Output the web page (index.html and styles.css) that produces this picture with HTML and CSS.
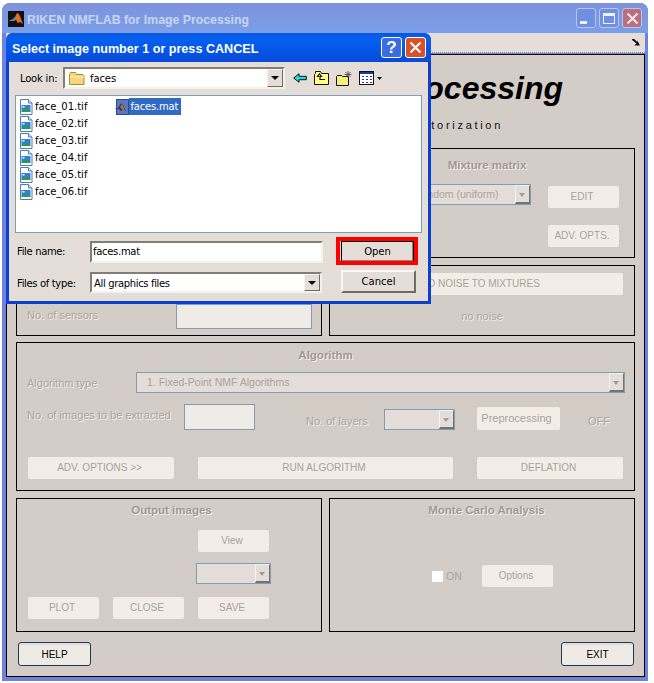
FILE: index.html
```html
<!DOCTYPE html>
<html lang="en">

<head>
    <meta charset="UTF-8">
    <title>RIKEN NMFLAB for Image Processing</title>
    <link rel="stylesheet" href="styles.css">
</head>

<body>
    <svg class="defs" width="0" height="0">
        <symbol id="ico-tif" viewBox="0 0 14 16">
            <path d="M1.5.5h8l3.5 3.5v11.500h-11.500z" fill="#fff" stroke="#4a7cc0"/>
            <path d="M9.500.5v3.500h3.500" fill="#d8e6f6" stroke="#4a7cc0"/>
            <rect x="2.500" y="6" width="9" height="7" fill="#2f7fd8"/>
            <path d="M2.500 13l3-4 2 2 2-1.500 2 3.500z" fill="#2c9a4a"/>
            <rect x="3.500" y="7" width="2" height="1.500" fill="#fff"/>
        </symbol>
    </svg>

    <div class="window">
        <div class="titlebar">
            <svg class="app-logo" width="16" height="16" viewBox="0 0 16 16">
                <rect width="16" height="16" fill="#111"/>
                <path d="M1 10l4-2 2-2 2-4 2 1 4 10-3-2-2 1-2-3-3 1z" fill="#e2701c"/>
                <path d="M1 10l4-2 2-2 1 3-3 1z" fill="#3f8fc0"/>
            </svg>
            <span class="titlebar-text">RIKEN NMFLAB for Image Processing</span>
            <div class="win-buttons">
                <div class="win-btn"><span class="glyph-min"></span></div>
                <div class="win-btn"><span class="glyph-max"></span></div>
                <div class="win-btn win-close">
                    <svg width="13" height="13" viewBox="0 0 13 13"><path d="M1.500 1.500l10 10M11.500 1.500l-10 10" stroke="#f0e4ea" stroke-width="2.200"/></svg>
                </div>
            </div>
        </div>

        <div class="menu-band">
            <svg width="8" height="7" viewBox="0 0 9 8"><path d="M0 0h2.500l3.500 3.500V1.500L9 7.500H2.500L5 5 0 1z" fill="#111"/></svg>
        </div>

        <main class="client">
            <header class="banner">
                <h1>Processing</h1>
                <p>Factorization</p>
            </header>

            <div class="two-col top-rows">
                <section class="panel panel-mix"></section>
                <section class="panel panel-mix">
                    <h2 class="panel-title">Mixture matrix</h2>
                    <div class="mix-body">
                        <div class="combo combo-mix"><span>random (uniform)</span><i class="combo-arrow"></i></div>
                        <div class="mix-buttons">
                            <button class="btn btn-sm" disabled>EDIT</button>
                            <button class="btn btn-sm" disabled>ADV. OPTS.</button>
                        </div>
                    </div>
                </section>
                <section class="panel panel-sensors">
                    <span class="lbl">No. of sensors</span>
                    <div class="field field-sensors"></div>
                </section>
                <section class="panel panel-noise">
                    <button class="btn btn-noise" disabled>ADD NOISE TO MIXTURES</button>
                    <span class="lbl">no noise</span>
                </section>
            </div>

            <section class="panel panel-algo">
                <h2 class="panel-title">Algorithm</h2>
                <div class="algo-type">
                    <span class="lbl">Algorithm type</span>
                    <div class="combo combo-algo"><span>1. Fixed-Point NMF Algorithms</span><i class="combo-arrow"></i></div>
                </div>
                <div class="algo-mid">
                    <span class="lbl lbl-images">No. of images to be extracted</span>
                    <div class="field field-images"></div>
                    <span class="lbl lbl-layers">No. of layers</span>
                    <div class="combo combo-layers"><i class="combo-arrow"></i></div>
                    <button class="btn btn-pre" disabled>Preprocessing</button>
                    <span class="lbl lbl-off">OFF</span>
                </div>
                <div class="algo-actions">
                    <button class="btn btn-adv" disabled>ADV. OPTIONS &gt;&gt;</button>
                    <button class="btn btn-run" disabled>RUN ALGORITHM</button>
                    <button class="btn btn-adv" disabled>DEFLATION</button>
                </div>
            </section>

            <div class="two-col bottom-row">
                <section class="panel panel-output">
                    <h2 class="panel-title">Output images</h2>
                    <div class="output-stack">
                        <button class="btn btn-sm" disabled>View</button>
                        <div class="combo combo-output"><i class="combo-arrow"></i></div>
                    </div>
                    <div class="output-actions">
                        <button class="btn btn-sm" disabled>PLOT</button>
                        <button class="btn btn-sm" disabled>CLOSE</button>
                        <button class="btn btn-sm" disabled>SAVE</button>
                    </div>
                </section>
                <section class="panel panel-monte">
                    <h2 class="panel-title">Monte Carlo Analysis</h2>
                    <div class="monte-body">
                        <i class="checkbox"></i>
                        <span class="on-text">ON</span>
                        <button class="btn btn-sm" disabled>Options</button>
                    </div>
                </section>
            </div>

            <footer class="footer">
                <button class="btn-main">HELP</button>
                <button class="btn-main">EXIT</button>
            </footer>
        </main>
    </div>

    <!-- file dialog on top of the main window -->
    <div class="dialog">
        <div class="dlg-title">
            <span class="dlg-title-text">Select image number 1 or press CANCEL</span>
            <div class="dlg-btns">
                <div class="dlg-btn dlg-help">?</div>
                <div class="dlg-btn dlg-close">
                    <svg width="13" height="13" viewBox="0 0 13 13"><path d="M1.500 1.500l10 10M11.500 1.500l-10 10" stroke="#fff" stroke-width="2.200"/></svg>
                </div>
            </div>
        </div>
        <div class="dlg-body">
            <div class="look-row">
                <span class="look-label">Look in:</span>
                <div class="xp-combo look-combo">
                    <svg width="16" height="13" viewBox="0 0 16 13">
                        <path d="M.5 2.500l1-2h5l1 2h6.500l1 1v9h-14.500z" fill="#f6d77c" stroke="#b08a2e"/>
                        <path d="M1 5h14" stroke="#fdf2c4"/>
                    </svg>
                    <span class="look-text">faces</span>
                    <i class="xp-arrow"></i>
                </div>
                <div class="toolbar">
                    <svg width="14" height="10" viewBox="0 0 14 10"><path d="M.7 5L6 .7v2.600h7.300v3.400H6v2.600z" fill="#19e0e0" stroke="#111"/></svg>
                    <svg width="15" height="14" viewBox="0 0 15 14">
                        <path d="M.5 13.500v-10l1-1v-2h5l1 2h7v11z" fill="#ffff80" stroke="#111"/>
                        <path d="M5 5.500h-1.500l2-2.500 2 2.500H6v3h5" fill="none" stroke="#111" stroke-width="1.200"/>
                    </svg>
                    <svg width="17" height="15" viewBox="0 0 17 15">
                        <path d="M.5 14.500v-9l1-1h4l1 1h6v9z" fill="#f6f07a" stroke="#111"/>
                        <path d="M12 0v7M8.500 3.500h7M9.500 1l5 5M14.500 1l-5 5" stroke="#444" stroke-width=".8"/>
                    </svg>
                    <svg class="views" width="24" height="14" viewBox="0 0 24 14">
                        <rect x=".5" y=".5" width="14" height="13" fill="#fff" stroke="#111"/>
                        <rect x="1" y="1" width="13" height="2" fill="#1a3a9a"/>
                        <path d="M3 5h2v1H3zM7 5h2v1H7zM11 5h2v1h-2zM3 8h2v1H3zM7 8h2v1H7zM11 8h2v1h-2zM3 11h2v1H3zM7 11h2v1H7zM11 11h2v1h-2z" fill="#1a3a9a"/>
                        <path d="M18 6h5l-2.500 3z" fill="#111"/>
                    </svg>
                </div>
            </div>

            <div class="file-list">
                <ul class="file-col">
                    <li><svg width="14" height="16"><use href="#ico-tif"/></svg>face_01.tif</li>
                    <li><svg width="14" height="16"><use href="#ico-tif"/></svg>face_02.tif</li>
                    <li><svg width="14" height="16"><use href="#ico-tif"/></svg>face_03.tif</li>
                    <li><svg width="14" height="16"><use href="#ico-tif"/></svg>face_04.tif</li>
                    <li><svg width="14" height="16"><use href="#ico-tif"/></svg>face_05.tif</li>
                    <li><svg width="14" height="16"><use href="#ico-tif"/></svg>face_06.tif</li>
                </ul>
                <ul class="file-col file-col-mat">
                    <li>
                        <svg width="15" height="16" viewBox="0 0 15 16">
                            <rect x="2.500" y=".5" width="12" height="15" fill="#5a78c0" stroke="#2c4a90"/>
                            <path d="M0 10l4-1 3-5 2 2 3 6-3-1-2 1-2-2z" fill="#2a3a70"/>
                            <path d="M6 8l2-3 2 4 1 3-2-1z" fill="#c86a30"/>
                        </svg>
                        <span class="selected">faces.mat</span>
                    </li>
                </ul>
            </div>

            <div class="dlg-form">
                <span class="form-label">File name:</span>
                <input class="name-input" type="text" value="faces.mat">
                <div class="open-wrap"><button class="xp-btn xp-open">Open</button></div>

                <span class="form-label form-label-type">Files of type:</span>
                <div class="xp-combo type-combo">
                    <span class="type-text">All graphics files</span>
                    <i class="xp-arrow"></i>
                </div>
                <button class="xp-btn xp-cancel">Cancel</button>
            </div>
        </div>
    </div>
</body>

</html>
```

FILE: styles.css
```css
* {
    box-sizing: border-box;
}

html,
body {
    margin: 0;
    padding: 0;
    height: 683px;
    overflow: hidden;
    background: #fff;
}

body {
    position: relative;
    font-family: "Liberation Sans", Arial, sans-serif;
    font-size: 11px;
}

.defs {
    position: absolute;
}

ul {
    list-style: none;
    margin: 0;
    padding: 0;
}

/* main window */
.window {
    width: 646px;
    height: 678px;
    margin: 3px 0 0 2px;
    padding: 0 3px 4px 4px;
    background: #6f83dc;
    border-radius: 8px 8px 0 0;
    display: flex;
    flex-direction: column;
}

.titlebar {
    height: 30px;
    margin: 0 -3px 0 -4px;
    padding: 0 6px;
    display: flex;
    align-items: center;
    border-radius: 8px 8px 0 0;
    background: linear-gradient(#7d93dc, #7c9be4 70%, #7a9fe8);
}

.app-logo {
    margin-right: 3px;
    margin-top: 1px;
}

.titlebar-text {
    font-family: "Liberation Sans", sans-serif;
    font-weight: bold;
    font-size: 12.300px;
    color: #c8d5f4;
    padding-top: 3px;
}

.win-buttons {
    margin-left: auto;
    display: flex;
    gap: 3px;
}

.win-btn {
    width: 20px;
    height: 20px;
    border: 1px solid #b7c7f0;
    border-radius: 3px;
    background: #6f90e0;
    display: flex;
    align-items: center;
    justify-content: center;
    position: relative;
}

.win-close {
    background: #b8707f;
}

.glyph-min {
    width: 7px;
    height: 3px;
    background: #eef2fb;
    position: relative;
    top: 4px;
    left: -3px;
}

.glyph-max {
    width: 12px;
    height: 11px;
    border: 1px solid #eef2fb;
    border-top-width: 3px;
}

.menu-band {
    height: 20px;
    background: #e5ded8;
    border-bottom: 1px dotted #8a8580;
    display: flex;
    justify-content: flex-end;
    align-items: center;
    padding-right: 5px;
}

.client {
    flex: 1;
    margin-top: 1px;
    border: 1px solid #000;
    background: #d4ccc6;
    padding: 0 9px;
    display: flex;
    flex-direction: column;
}

.banner {
    height: 93px;
    flex: none;
}

.banner h1 {
    margin: 18px 0 0;
    font-size: 32px;
    line-height: 30px;
    font-weight: bold;
    font-style: italic;
    color: #000;
    text-align: right;
    white-space: nowrap;
    padding-right: 72px;
}

.banner p {
    margin: 15px 0 0;
    font-size: 11px;
    line-height: 14px;
    letter-spacing: 2.700px;
    text-align: right;
    white-space: nowrap;
    padding-right: 132px;
    color: #111;
}

.two-col {
    display: grid;
    grid-template-columns: 306px 306px;
    column-gap: 7px;
    flex: none;
}

.top-rows {
    grid-template-rows: 110px 71px;
    row-gap: 7px;
}

.panel {
    border: 1px solid #000;
    min-width: 0;
}

.panel-title {
    margin: 0;
    text-align: center;
    font-size: 11.500px;
    line-height: 14px;
    font-weight: bold;
    color: #a09a95;
    text-shadow: 1px 1px 0 #f4f0ec;
}

.lbl {
    font-size: 11px;
    line-height: 14px;
    color: #aaa4a0;
    text-shadow: 1px 1px 0 #f4f0ec;
    white-space: nowrap;
}

.btn {
    display: block;
    padding: 0 3px 1px 0;
    border: 0;
    border-radius: 2px;
    background: #f3ede7;
    color: #a8a39c;
    font-family: "Liberation Sans", Arial, sans-serif;
    font-size: 10px;
    height: 22px;
    white-space: nowrap;
}

.btn-sm {
    width: 71px;
}

.field {
    background: #eeece4;
    border: 1px solid #7f9db9;
}

.combo {
    position: relative;
    display: flex;
    align-items: center;
    background: #e5ded8;
    border: 1px solid #7f9db9;
    color: #a8a39c;
    font-size: 10.5px;
}

.combo-arrow {
    position: absolute;
    right: 0;
    top: 0;
    bottom: 0;
    width: 15px;
    background: #e5ded8;
    border: 1px solid;
    border-color: #f6f2ee #77736e #77736e #f6f2ee;
    border-bottom-width: 2px;
}

.combo-arrow::after {
    content: "";
    position: absolute;
    left: 3px;
    top: 7px;
    border: 3.500px solid transparent;
    border-top: 4px solid #a09b96;
    border-bottom: 0;
}

/* mixture + noise */
.panel-mix .panel-title {
    margin-top: 9px;
    padding-left: 10px;
}

.mix-body {
    display: flex;
    justify-content: flex-end;
    gap: 17px;
    padding-right: 15px;
    margin-top: 12px;
}

.combo-mix {
    width: 124px;
    height: 21px;
    padding: 0 0 1px 10px;
}

.mix-buttons {
    display: flex;
    flex-direction: column;
    gap: 17px;
    margin-top: 2px;
}

.panel-sensors {
    display: flex;
    align-items: flex-start;
    justify-content: space-between;
    padding: 38px 9px 0 10px;
}

.panel-sensors .lbl {
    margin-top: 4px;
}

.field-sensors {
    width: 136px;
    height: 25px;
}

.panel-noise {
    display: flex;
    flex-direction: column;
    align-items: center;
    padding: 7px 11px 0 0;
}

.btn-noise {
    width: 293px;
    align-self: flex-end;
    padding-left: 4px;
}

.panel-noise .lbl {
    margin: 14px -11px 0 0;
}

/* algorithm */
.panel-algo {
    margin-top: 6px;
    height: 149px;
    flex: none;
    padding: 5px 10px 0 10px;
}

.algo-type {
    display: flex;
    align-items: center;
    margin-top: 10px;
}

.algo-type .lbl {
    width: 109px;
    margin-top: 1px;
}

.combo-algo {
    flex: 1;
    height: 21px;
    margin-right: -1px;
    padding: 0 0 1px 10px;
}

.algo-mid {
    display: flex;
    height: 26px;
    margin-top: 11px;
    align-items: flex-start;
}

.lbl-images {
    width: 157px;
    margin-top: 4px;
}

.field-images {
    width: 71px;
    height: 26px;
}

.lbl-layers {
    margin: 10px 0 0 51px;
    width: 78px;
}

.combo-layers {
    width: 71px;
    height: 21px;
    margin-top: 5px;
}

.btn-pre {
    width: 83px;
    height: 23px;
    margin: 3px 0 0 22px;
    padding: 0 4px 2px 0;
    font-size: 11px;
}

.lbl-off {
    margin: 10px 0 0 28px;
}

.algo-actions {
    display: flex;
    gap: 24px;
    margin: 27px 0 0 1px;
}

.btn-adv {
    width: 146px;
}

.btn-run {
    width: 255px;
}

/* output + monte carlo */
.bottom-row {
    margin-top: 7px;
    height: 134px;
}

.panel-output {
    padding: 4px 0 0 11px;
}

.panel-output .panel-title {
    margin-left: -6px;
}

.output-stack {
    display: flex;
    flex-direction: column;
    align-items: flex-end;
    padding-right: 52px;
    margin-top: 13px;
}

.combo-output {
    width: 75px;
    height: 21px;
    margin: 11px -2px 0 0;
}

.output-actions {
    display: flex;
    gap: 14px;
    margin-top: 13px;
}

.panel-monte {
    padding-top: 4px;
}

.panel-monte .panel-title {
    padding-left: 9px;
}

.monte-body {
    display: flex;
    align-items: center;
    margin: 48px 0 0 102px;
}

.checkbox {
    width: 11px;
    height: 11px;
    background: #fff;
}

.on-text {
    margin-left: 3px;
    width: 36px;
    color: #aaa4a0;
    font-size: 10.500px;
}

.footer {
    display: flex;
    justify-content: space-between;
    margin-top: 10px;
    padding: 0 1px 0 2px;
}

.btn-main {
    width: 73px;
    height: 24px;
    padding: 0;
    background: #f0eae4;
    border: 1px solid #1c3a5a;
    border-radius: 3px;
    font-family: "Liberation Sans", Arial, sans-serif;
    font-size: 10px;
    color: #000;
    box-shadow: inset 0 2px 0 #e0dcd8;
}

/* file dialog */
.dialog {
    position: absolute;
    left: 6px;
    top: 33px;
    width: 425px;
    height: 271px;
    background: #0a3fd0;
    border-radius: 7px 7px 0 0;
    padding: 0 3px 3px 3px;
    display: flex;
    flex-direction: column;
    font-family: "DejaVu Sans", sans-serif;
    font-size: 10px;
    color: #000;
}

.dlg-title {
    height: 29px;
    margin: 0 -3px;
    padding: 0 5px 0 6px;
    border-radius: 7px 7px 0 0;
    background: linear-gradient(#0a55e0, #0560f0 20%, #0555e8 60%, #0a4ad8);
    display: flex;
    align-items: center;
    color: #fff;
    font-family: "Liberation Sans", sans-serif;
    font-weight: bold;
    font-size: 12.600px;
}

.dlg-title-text {
    padding-top: 3px;
}

.dlg-btns {
    margin-left: auto;
    display: flex;
    gap: 3px;
}

.dlg-btn {
    width: 21px;
    height: 21px;
    border: 1px solid #fff;
    border-radius: 3px;
    display: flex;
    align-items: center;
    justify-content: center;
    color: #fff;
    font-family: "Liberation Sans", Arial, sans-serif;
    font-size: 17px;
    font-weight: bold;
}

.dlg-help {
    background: #3a6ee0;
}

.dlg-close {
    background: #d9502a;
}

.dlg-body {
    flex: 1;
    background: #e5ded8;
    padding: 5px 0 0 6px;
    display: flex;
    flex-direction: column;
}

.look-row {
    display: flex;
    align-items: center;
    height: 22px;
}

.look-label {
    width: 48px;
    padding-left: 5px;
    letter-spacing: -0.2px;
}

.xp-combo {
    position: relative;
    display: flex;
    align-items: center;
    background: #fff;
    border: 2px solid;
    border-color: #827d77 #f4f1e8 #f4f1e8 #827d77;
}

.xp-arrow {
    position: absolute;
    right: 0;
    top: 0;
    bottom: 0;
    width: 16px;
    background: #e5ded8;
    border: 1px solid;
    border-color: #f6f2ee #6f6b66 #6f6b66 #f6f2ee;
}

.xp-arrow::after {
    content: "";
    position: absolute;
    left: 3px;
    top: 6px;
    border: 4px solid transparent;
    border-top: 4px solid #000;
    border-bottom: 0;
}

.look-combo {
    width: 222px;
    height: 22px;
    padding-left: 4px;
}

.look-text {
    margin-left: 5px;
    letter-spacing: -0.1px;
}

.toolbar {
    display: flex;
    align-items: center;
    gap: 7px;
    margin-left: 8px;
}

.views {
    margin-left: -1px;
}

.file-list {
    width: 407px;
    height: 138px;
    margin-top: 6px;
    background: #fff;
    border: 1px solid #7f9db9;
    display: flex;
    padding: 2px 0 0 3px;
    gap: 27px;
}

.file-col li {
    height: 17px;
    display: flex;
    align-items: center;
    gap: 2px;
    white-space: nowrap;
}

.file-col-mat li {
    gap: 0;
}

.selected {
    background: #316ac5;
    color: #fff;
    padding: 0 3px 0 1px;
    line-height: 17px;
    height: 17px;
    letter-spacing: -0.2px;
}

.dlg-form {
    display: grid;
    grid-template-columns: 73px 251px 75px;
    grid-template-rows: 22px 23px;
    margin-left: 2px;
    margin-top: 8px;
    row-gap: 7px;
    align-items: start;
}

.form-label {
    letter-spacing: -0.35px;
    line-height: 21px;
}

.form-label-type {
    margin-top: 3px;
}

.name-input {
    height: 22px;
    width: 233px;
    border: 2px solid;
    border-color: #827d77 #f4f1e8 #f4f1e8 #827d77;
    background: #fff;
    padding: 0 1px 1px 1px;
    font-family: "DejaVu Sans", sans-serif;
    font-size: 10px;
    letter-spacing: -0.3px;
    color: #000;
}

.type-combo {
    width: 232px;
    height: 21px;
    margin-top: 2px;
    padding-left: 2px;
}

.type-text {
    letter-spacing: -0.35px;
    padding-top: 1px;
}

.xp-btn {
    display: block;
    padding: 0;
    background: #e5ded8;
    font-family: "DejaVu Sans", sans-serif;
    font-size: 10px;
    color: #000;
}

.xp-open {
    width: 73px;
    height: 21px;
    border: 1px solid #000;
    box-shadow: inset -1px -1px 0 #8a8580;
}

.xp-cancel {
    width: 75px;
    height: 23px;
    border: 2px solid;
    border-color: #fbf8f2 #6f6b66 #6f6b66 #fbf8f2;
}

.open-wrap {
    position: relative;
    height: 21px;
}

.open-wrap::after {
    content: "";
    box-sizing: border-box;
    position: absolute;
    left: -5px;
    top: -4px;
    width: 82px;
    height: 28px;
    border: 4px solid #f00;
}
```
